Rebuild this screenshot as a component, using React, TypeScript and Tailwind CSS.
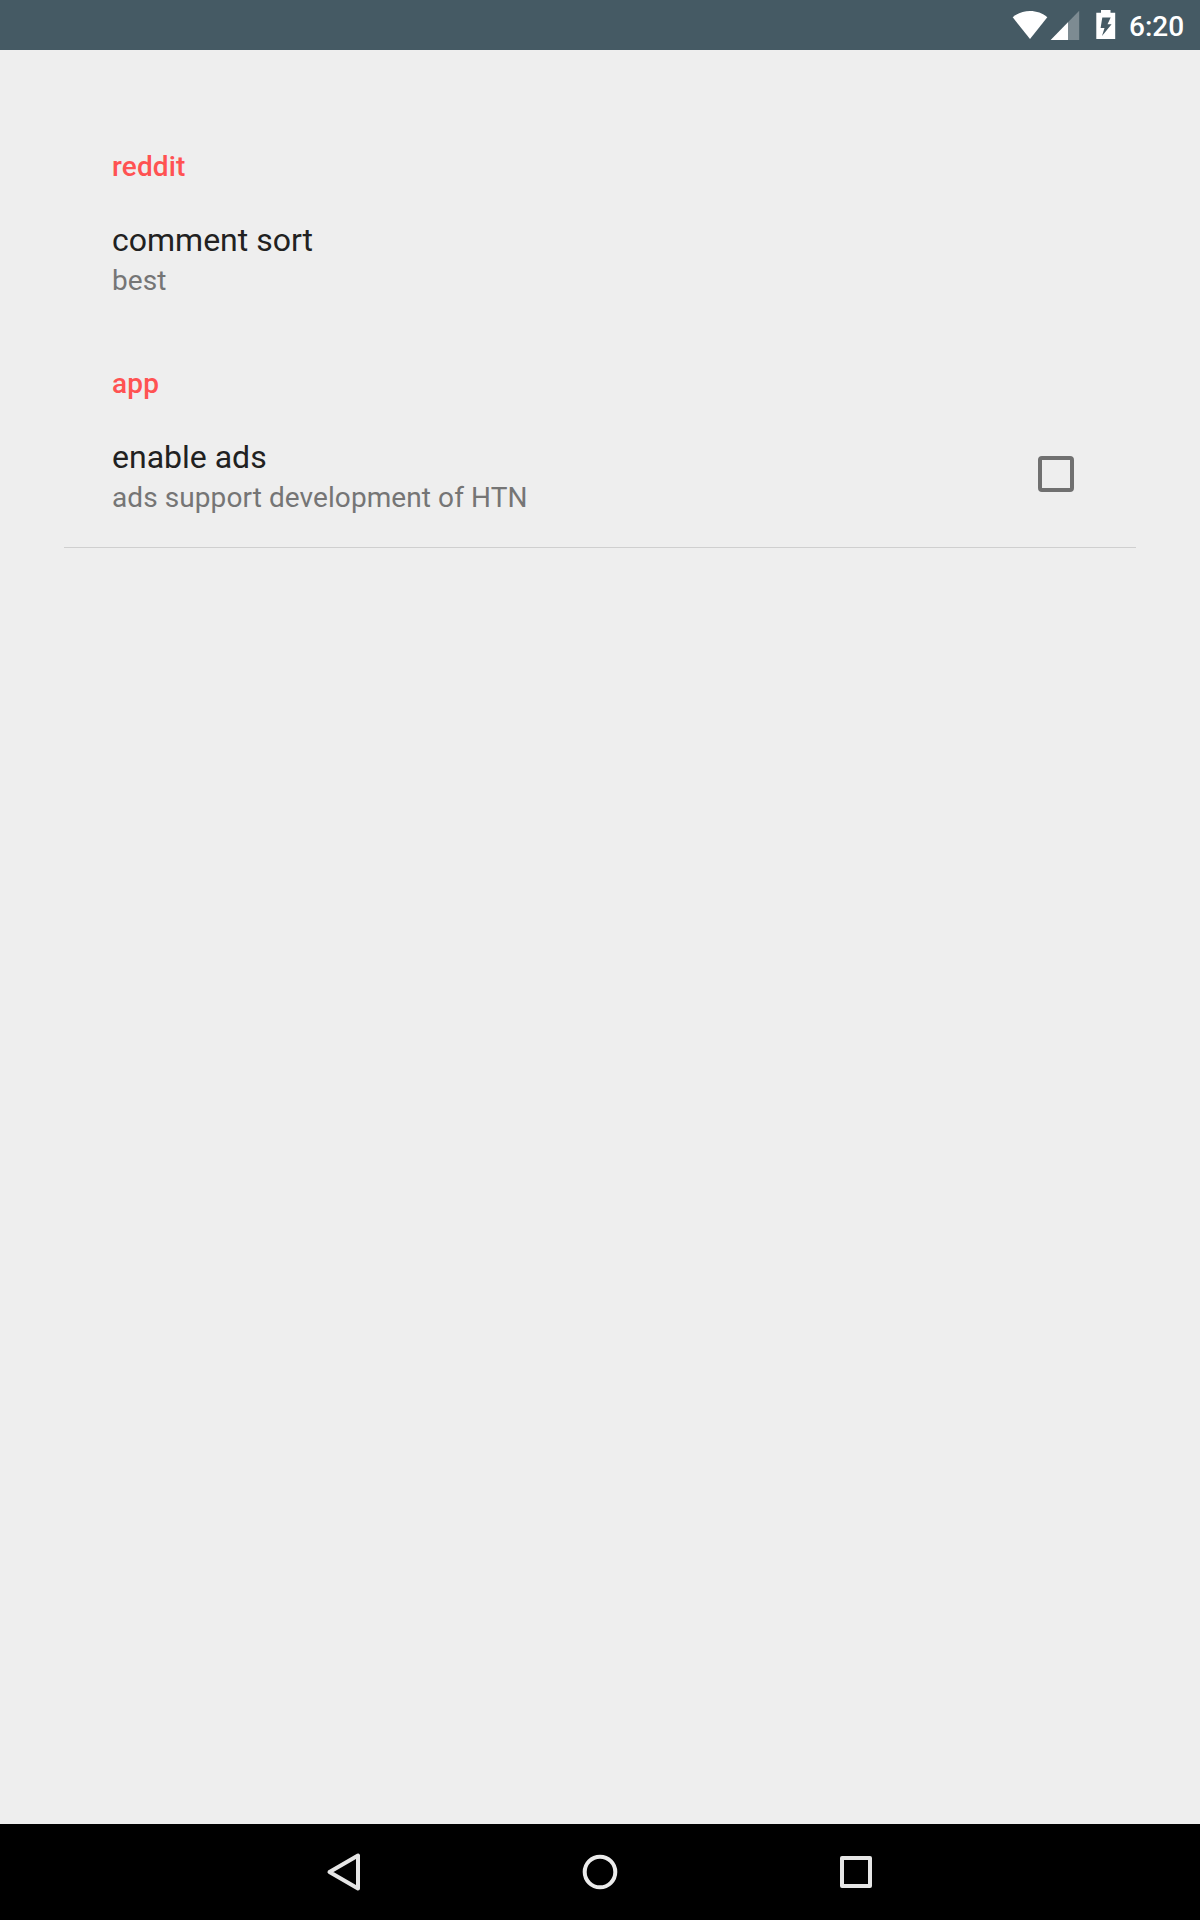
import type { ReactNode } from "react";

function StatusBar() {
  return (
    <header className="flex h-[50px] shrink-0 items-center bg-[#455a64] pl-[1012px] text-white">
      <svg width="36" height="50" viewBox="0 0 36 50" fill="#fff">
        <path d="M18 39 0.700 17.300C5.300 13.200 11.500 11 18 11s12.700 2.200 17.300 6.300Z" />
      </svg>
      <svg className="ml-0.5" width="30" height="50" viewBox="0 0 30 50" fill="#fff">
        <path d="M29.200 10.700V40H0.700Z" opacity=".3" />
        <path d="M18 22.300V40H0.700Z" />
      </svg>
      <svg className="ml-4" width="20" height="50" viewBox="0 0 20 50" fill="#fff">
        <path
          fillRule="evenodd"
          d="M5 10h9.500v2.700H19.200V39H0.300V12.700H5ZM6.300 17.600 4.600 27.900H8.500L6 36 15.600 24.200H11.500L14.700 17.600Z"
        />
      </svg>
      <span className="mt-[3px] ml-[13px] text-[28px] leading-[32px] font-medium">6:20</span>
    </header>
  );
}

function SectionTitle({ children }: { children: ReactNode }) {
  return <h2 className="text-[28px] leading-[33px] font-medium tracking-[0.15px] text-[#ff5252]">{children}</h2>;
}

function Preference({ title, summary, children }: { title: string; summary: string; children?: ReactNode }) {
  return (
    <div className="mt-[38px] flex h-[76px] items-start justify-between">
      <div>
        <div className="text-[32px] leading-[38px] text-[#212121]">{title}</div>
        <div className="mt-[5px] text-[28px] leading-[33px] tracking-[0.08px] text-[#757575]">{summary}</div>
      </div>
      {children}
    </div>
  );
}

export default function App() {
  return (
    <div className="flex h-[1920px] w-[1200px] flex-col overflow-hidden bg-[#eeeeee] font-['Roboto',sans-serif]">
      <StatusBar />
      <main className="flex-1 px-16 pt-[100px]">
        <section className="h-[217px] px-12">
          <SectionTitle>reddit</SectionTitle>
          <Preference title="comment sort" summary="best" />
        </section>
        <section className="h-[181px] border-b border-[#cfcfcf] px-12">
          <SectionTitle>app</SectionTitle>
          <Preference title="enable ads" summary="ads support development of HTN">
            <button
              role="checkbox"
              aria-checked="false"
              aria-label="enable ads"
              className="mt-[18px] mr-[14px] size-9 rounded-[4px] border-4 border-[#707070]"
            />
          </Preference>
        </section>
      </main>
      <nav className="flex h-24 shrink-0 items-center justify-center bg-black">
        <div className="flex w-64 justify-center">
          <svg width="96" height="96" viewBox="0 0 96 96" fill="none" stroke="#e6e6e6" strokeWidth="4" strokeLinejoin="round">
            <path d="M62 31.500V64.500L33.500 48Z" />
          </svg>
        </div>
        <div className="flex w-64 justify-center">
          <svg width="96" height="96" viewBox="0 0 96 96" fill="none" stroke="#ececec" strokeWidth="4">
            <circle cx="48" cy="48" r="15.300" />
          </svg>
        </div>
        <div className="flex w-64 justify-center">
          <svg width="96" height="96" viewBox="0 0 96 96" fill="none" stroke="#e6e6e6" strokeWidth="4" strokeLinejoin="round">
            <path d="M34 34H62V62H34Z" />
          </svg>
        </div>
      </nav>
    </div>
  );
}
